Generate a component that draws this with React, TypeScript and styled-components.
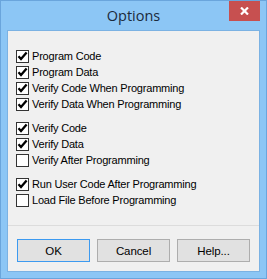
import React from "react";
import styled, { createGlobalStyle } from "styled-components";

const Global = createGlobalStyle`
  html, body { margin: 0; padding: 0; background: #ffffff; }
  * { box-sizing: border-box; }
`;

const Window = styled.div`
  width: 267px;
  height: 279px;
  background: #8cc6f5;
  border: 1px solid #6aa5dc;
  display: flex;
  flex-direction: column;
  font-family: "Liberation Sans", Arial, sans-serif;
`;

const TitleBar = styled.div`
  height: 29px;
  padding: 0 6px;
  display: grid;
  grid-template-columns: 31px 1fr 31px;
  align-items: start;
`;

const Title = styled.div`
  grid-column: 2;
  text-align: center;
  font-family: "Open Sans", "Noto Sans", sans-serif;
  font-size: 14.5px;
  line-height: 29px;
  color: #1b2a3c;
`;

const CloseButton = styled.div`
  grid-column: 3;
  height: 20px;
  background: #c75050;
  display: flex;
  align-items: center;
  justify-content: center;
`;

const Client = styled.div`
  flex: 1;
  margin: 0 6px 6px 6px;
  border: 1px solid #7bb2e3;
  background: #f0f0f0;
  display: flex;
  flex-direction: column;
`;

const Panel = styled.div`
  height: 195px;
  border-bottom: 1px solid #dcdcdc;
  padding: 17px 0 0 8px;
  display: flex;
  flex-direction: column;
  gap: 8px;
`;

const Group = styled.div`
  display: flex;
  flex-direction: column;
`;

const Row = styled.label`
  height: 16px;
  display: flex;
  align-items: center;
  gap: 3px;
  font-size: 11px;
  letter-spacing: -0.2px;
  color: #000;
`;

const Box = styled.span`
  width: 13px;
  height: 13px;
  border: 1px solid #333333;
  background: #ffffff;
  display: flex;
  align-items: center;
  justify-content: center;
  flex: none;
`;

const ButtonBar = styled.div`
  flex: 1;
  display: flex;
  gap: 7px;
  padding: 13px 0 0 9px;
`;

const Button = styled.div<{ $default?: boolean }>`
  width: 73px;
  height: 23px;
  border: 1px solid ${(p) => (p.$default ? "#3c9af0" : "#adadad")};
  background: #e1e1e1;
  display: flex;
  align-items: center;
  justify-content: center;
  font-size: 11.5px;
  letter-spacing: -0.1px;
  color: #000;
`;

const Check = () => (
  <svg width="11" height="11" viewBox="0 0 11 11">
    <path d="M1.5 5.3 L4 8 L9.6 1.6" fill="none" stroke="#000" strokeWidth="2.3" />
  </svg>
);

const CheckRow = ({ label, checked }: { label: string; checked: boolean }) => (
  <Row>
    <Box>{checked && <Check />}</Box>
    <span>{label}</span>
  </Row>
);

const groups: { label: string; checked: boolean }[][] = [
  [
    { label: "Program Code", checked: true },
    { label: "Program Data", checked: true },
    { label: "Verify Code When Programming", checked: true },
    { label: "Verify Data When Programming", checked: true },
  ],
  [
    { label: "Verify Code", checked: true },
    { label: "Verify Data", checked: true },
    { label: "Verify After Programming", checked: false },
  ],
  [
    { label: "Run User Code After Programming", checked: true },
    { label: "Load File Before Programming", checked: false },
  ],
];

export default function App() {
  return (
    <>
      <Global />
      <Window>
        <TitleBar>
          <Title>Options</Title>
          <CloseButton>
            <svg width="9" height="8" viewBox="0 0 9 8">
              <path d="M1 0.5 L8 7.5 M8 0.5 L1 7.5" stroke="#fff" strokeWidth="2.2" />
            </svg>
          </CloseButton>
        </TitleBar>
        <Client>
          <Panel>
            {groups.map((g, i) => (
              <Group key={i}>
                {g.map((r) => (
                  <CheckRow key={r.label} label={r.label} checked={r.checked} />
                ))}
              </Group>
            ))}
          </Panel>
          <ButtonBar>
            <Button $default>OK</Button>
            <Button>Cancel</Button>
            <Button>Help...</Button>
          </ButtonBar>
        </Client>
      </Window>
    </>
  );
}
